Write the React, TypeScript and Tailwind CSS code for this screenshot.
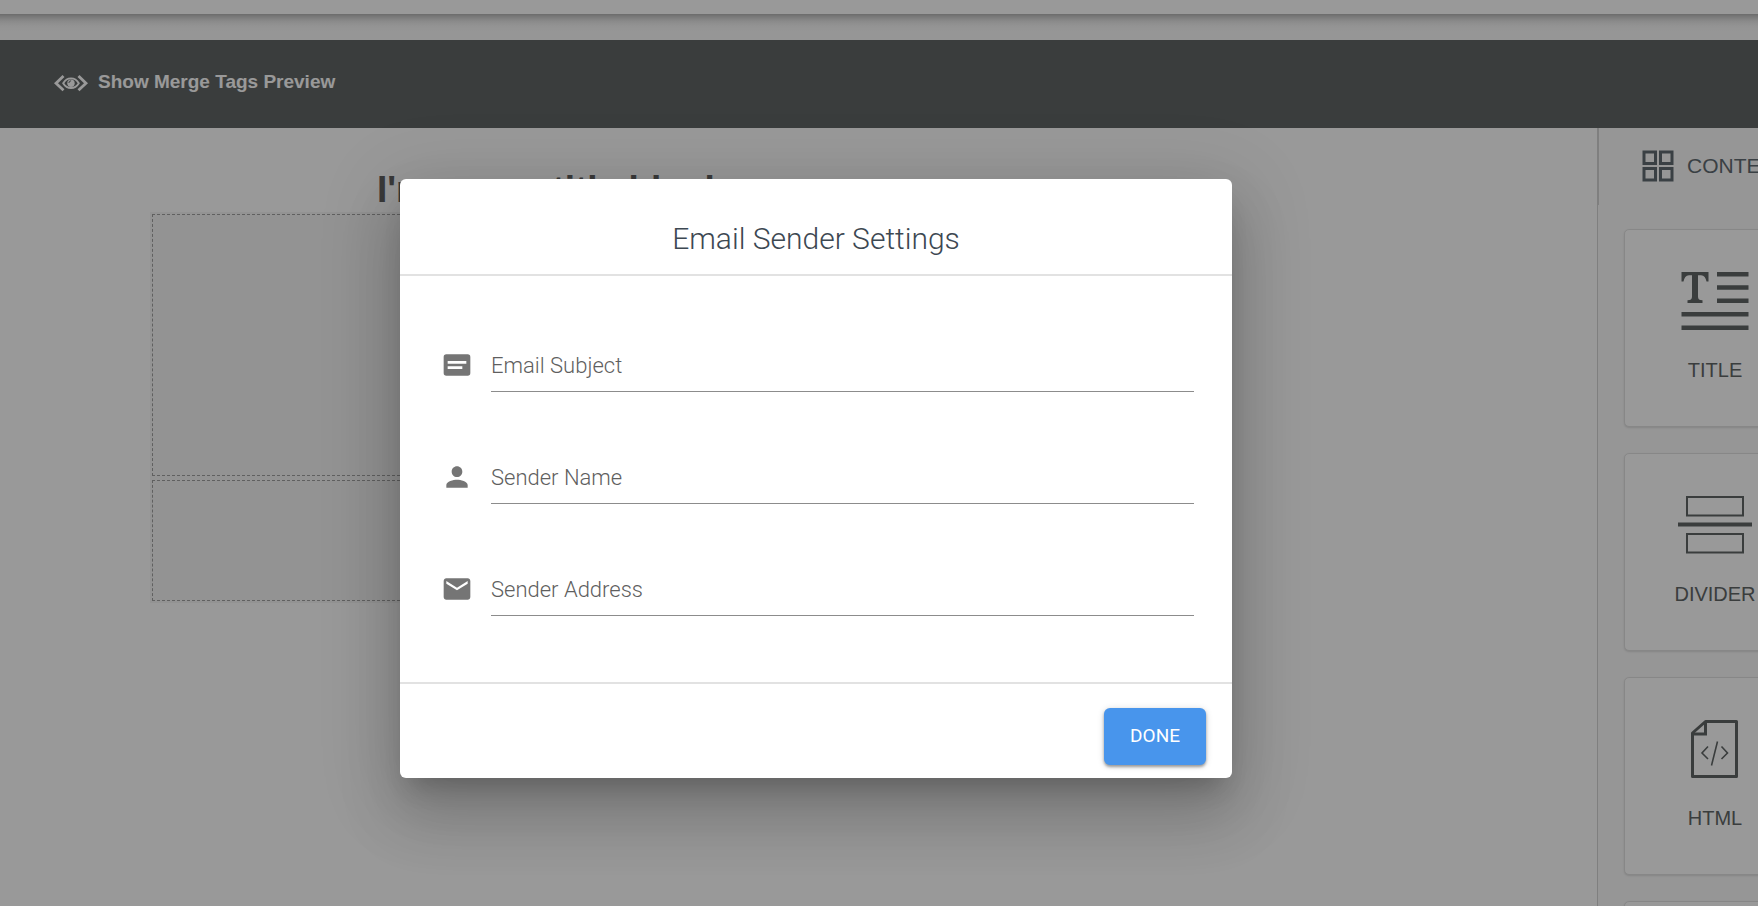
import type { ReactNode } from "react";

const helvetica = "font-['Liberation_Sans',Arial,sans-serif]";
const roboto = "font-[Roboto,sans-serif]";

function MergeTagsIcon() {
  return (
    <svg width="34" height="18" viewBox="0 0 34 18" fill="none" stroke="currentColor" aria-hidden="true">
      <path d="M9.500 2 2 9.200l7.500 7M24.500 2l7.500 7.200-7.500 7" strokeWidth="2.800" />
      <path d="M9.200 9.200c2-3.300 4.700-4.800 7.800-4.800s5.800 1.500 7.800 4.800c-2 3.300-4.700 4.800-7.800 4.800S11.200 12.500 9.200 9.200Z" strokeWidth="1.900" />
      <circle cx="17" cy="9.200" r="3.700" fill="currentColor" stroke="none" />
      <path d="M14.900 9a2.200 2.200 0 0 1 2.200-2.200" stroke="#626767" strokeWidth="1" />
    </svg>
  );
}

function GridIcon() {
  return (
    <svg width="32" height="32" viewBox="0 0 32 32" fill="none" stroke="currentColor" strokeWidth="3" aria-hidden="true">
      <path d="M2 2h11.500v11.500h-11.500zM18.500 2h11.500v11.500h-11.500zM2 18.500h11.500v11.500h-11.500zM18.500 18.500h11.500v11.500h-11.500z" />
    </svg>
  );
}

function TitleIcon() {
  return (
    <svg width="68" height="58" viewBox="0 0 68 58" fill="currentColor" aria-hidden="true">
      <path d="M0.500 0h27v9.500h-2c-.8-3.800-2.300-6-5.500-6.300h-3v21.500c0 2.600 1.300 3.300 4.500 3.600v2.700h-15v-2.700c3.200-.3 4.500-1 4.500-3.600v-21.500h-3c-3.200.3-4.700 2.500-5.500 6.300h-2z" />
      <path d="M36 0h31.500v4.500h-31.500zM36 13.300h31.500v4.500h-31.500zM36 26.600h31.500v4.500h-31.500zM.5 40h67v4.500h-67zM.5 53.400h67v4.500h-67z" />
    </svg>
  );
}

function DividerIcon() {
  return (
    <svg width="74" height="58" viewBox="0 0 74 58" fill="none" stroke="currentColor" strokeWidth="2" aria-hidden="true">
      <path d="M9 1h56v18.500h-56zM9 38h56v18.500h-56z" />
      <path d="M0 28.500h74" strokeWidth="4" />
    </svg>
  );
}

function HtmlIcon() {
  return (
    <svg width="48" height="58" viewBox="0 0 48 58" fill="none" stroke="currentColor" aria-hidden="true">
      <path d="M14.500 1.500h31v55h-44v-43.500z" strokeWidth="3" strokeLinejoin="round" />
      <path d="M14.500 1.500v12.500h-13" strokeWidth="3" />
      <path d="M17 26.500l-6 6.500 6 6M30.500 26.500l6 6.500-6 6M26.500 21.500l-6 24" strokeWidth="1.600" />
    </svg>
  );
}

const fields = [
  { id: "subject", label: "Email Subject", path: "M4 4h16a2 2 0 0 1 2 2v12a2 2 0 0 1-2 2H4a2 2 0 0 1-2-2V6a2 2 0 0 1 2-2ZM5 9v2h14V9ZM5 13v2h11v-2Z" },
  { id: "name", label: "Sender Name", path: "M12 12c2.210 0 4-1.790 4-4s-1.790-4-4-4-4 1.790-4 4 1.790 4 4 4Zm0 2c-2.670 0-8 1.340-8 4v2h16v-2c0-2.660-5.330-4-8-4Z" },
  { id: "address", label: "Sender Address", path: "M20 4H4c-1.100 0-1.990.9-1.990 2L2 18c0 1.100.9 2 2 2h16c1.100 0 2-.9 2-2V6c0-1.100-.9-2-2-2Zm0 4-8 5-8-5V6l8 5 8-5v2Z" },
];

function Field({ id, label, path }: { id: string; label: string; path: string }) {
  return (
    <div className="flex items-center gap-[18px]">
      <svg className="size-8 shrink-0 text-[#757575]" viewBox="0 0 24 24" fill="currentColor" fillRule="evenodd" aria-hidden="true">
        <path d={path} />
      </svg>
      <div className="grid flex-1 items-center">
        <label htmlFor={id} className="col-start-1 row-start-1 text-[22px] font-light text-[#5f5f5f]">
          {label}
        </label>
        <input id={id} type="text" className="col-start-1 row-start-1 h-[54px] w-full border-b border-[#8c8c8c] bg-transparent text-[22px] outline-none" />
      </div>
    </div>
  );
}

const cardFrame = "h-[198px] w-[182px] shrink-0 rounded-[5px] border border-[#e2e2e2] bg-white shadow-[0_1px_2px_rgba(0,0,0,0.12)]";

function BlockCard({ label, children }: { label: string; children: ReactNode }) {
  return (
    <button type="button" className={`flex flex-col items-center pt-[42px] text-[20px] text-[#626767] ${cardFrame}`}>
      {children}
      <span className="mt-[26px] leading-[28px]">{label}</span>
    </button>
  );
}

export default function App() {
  return (
    <div className={`relative flex h-screen flex-col overflow-hidden bg-white ${helvetica}`}>
      <header className="h-[14px] shrink-0 bg-white" />
      <div className="h-[26px] shrink-0 bg-[#fafafa] bg-[linear-gradient(to_bottom,#b4b4b4_0px,#cccccc_3px,#e6e6e6_7px,#f6f6f6_12px,#fafafa_17px)]" />
      <div className="flex h-[88px] shrink-0 items-center bg-[#626767] px-[54px] pb-[3px]">
        <button type="button" className="flex items-center gap-[10px] text-[19px] font-bold text-white">
          <MergeTagsIcon />
          Show Merge Tags Preview
        </button>
      </div>

      <div className="flex min-h-0 flex-1">
        <main className="flex-1 pl-[150px] pt-10">
          <div className="w-[802px]">
            <h1 className="text-center text-[37px] leading-[44px] font-bold text-[#626262]">I'm a new title block</h1>
            <div className="flex flex-col gap-1 bg-[#f5f5f5] p-[2px]">
              <div className="h-[262px] border border-dashed border-[#a0a0a0]" />
              <div className="h-[121px] border border-dashed border-[#a0a0a0]" />
            </div>
          </div>
        </main>
        <aside className="w-[161px] shrink-0 overflow-hidden border-l border-[#d4d4d4] bg-[#fafafa]">
          <div className="flex h-[77px] items-center gap-[13px] border-l border-[#d4d4d4] pl-[43px] pb-[2px] text-[21px] text-[#626c72]">
            <span className="shrink-0"><GridIcon /></span>
            CONTENT
          </div>
          <div className="flex flex-col gap-[26px] pl-[26px] pt-6">
            <BlockCard label="TITLE"><TitleIcon /></BlockCard>
            <BlockCard label="DIVIDER"><DividerIcon /></BlockCard>
            <BlockCard label="HTML"><HtmlIcon /></BlockCard>
            <div className={cardFrame} />
          </div>
        </aside>
      </div>

      <div className="absolute inset-0 z-20 bg-black/40 pl-[400px] pt-[179px]">
        <div
          role="dialog"
          aria-modal="true"
          aria-labelledby="dialog-title"
          className={`w-[832px] rounded-[6px] bg-white shadow-[0_18px_24px_-11px_rgba(0,0,0,0.2),0_38px_60px_5px_rgba(0,0,0,0.14),0_14px_74px_13px_rgba(0,0,0,0.12)] ${roboto}`}
        >
          <div className="border-b-2 border-[#e2e2e2] pt-10 pb-[15px]">
            <h2 id="dialog-title" className="text-center text-[30px] leading-10 font-light text-[#3d4852]">Email Sender Settings</h2>
          </div>
          <div className="flex flex-col gap-[58px] pt-[62px] pr-[38px] pb-[66px] pl-[41px]">
            {fields.map((field) => (
              <Field key={field.id} {...field} />
            ))}
          </div>
          <div className="flex justify-end border-t-2 border-[#e2e2e2] pt-6 pr-[26px] pb-[13px]">
            <button type="button" className="h-[57px] rounded-[6px] bg-[#4895ec] px-[26px] text-[19px] text-white shadow-[0_2px_3px_rgba(0,0,0,0.35),0_1px_7px_rgba(0,0,0,0.15)]">
              DONE
            </button>
          </div>
        </div>
      </div>
    </div>
  );
}
